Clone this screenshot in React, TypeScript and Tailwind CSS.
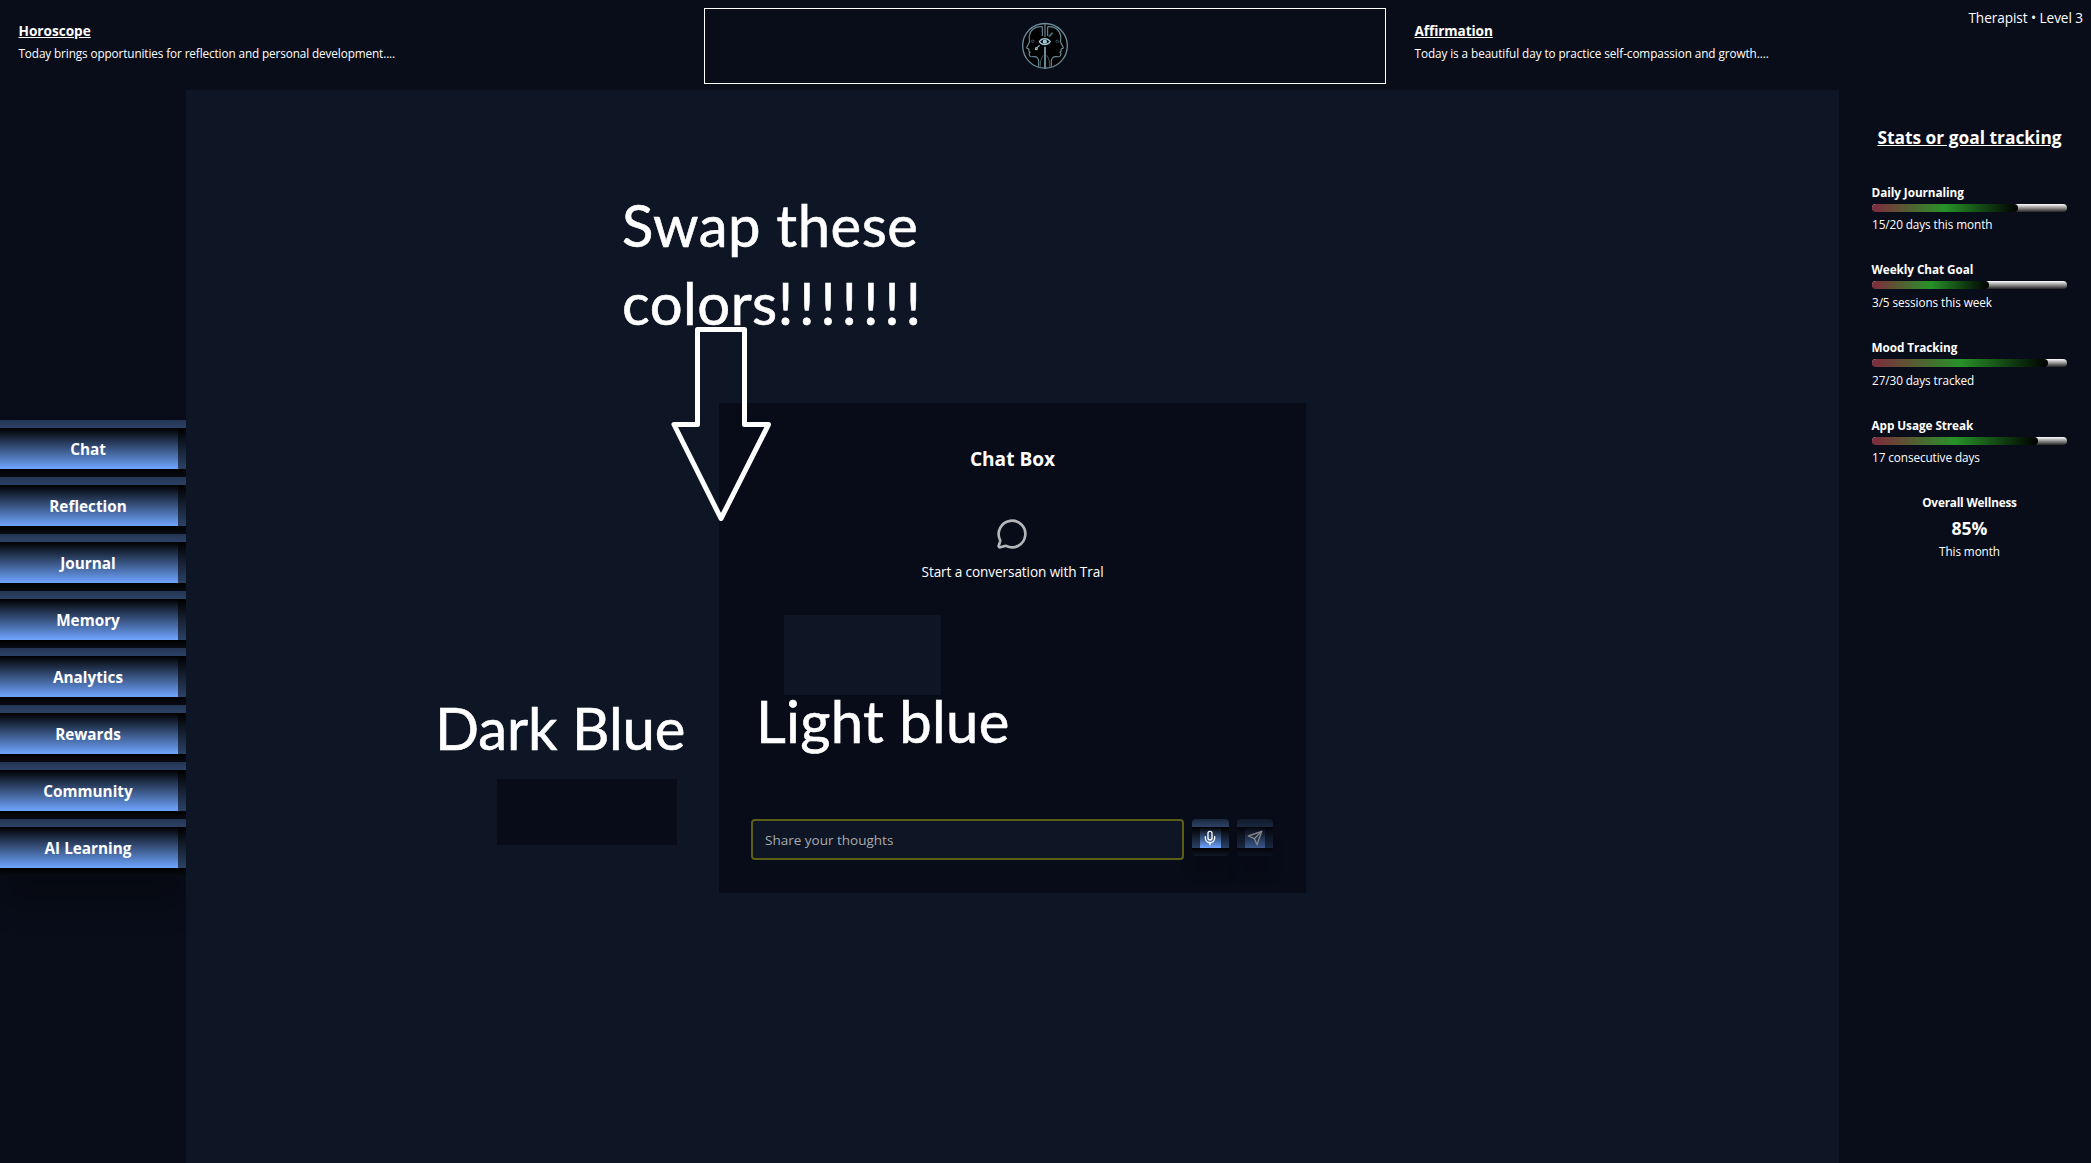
import { MessageCircle, Mic } from "lucide-react";

const navItems = [
  "Chat",
  "Reflection",
  "Journal",
  "Memory",
  "Analytics",
  "Rewards",
  "Community",
  "AI Learning",
];

const goals = [
  { title: "Daily Journaling", detail: "15/20 days this month", percent: 75 },
  { title: "Weekly Chat Goal", detail: "3/5 sessions this week", percent: 60 },
  { title: "Mood Tracking", detail: "27/30 days tracked", percent: 90 },
  { title: "App Usage Streak", detail: "17 consecutive days", percent: 85 },
];

function ProfileHalf() {
  return (
    <>
      <path d="M127 80C105 79 91 90 88 108C86 116 90 120 88 127L80 143C80 147 86 145 87 148L86 153L90 156L87 160C88 170 92 171 101 170C111 169 116 176 116 184V200" />
      <path d="M121 204V192C121 178 127 172 130 166" strokeWidth="2" />
      <path d="M93 124C96 119 101 119 103 124C100 128 96 128 93 124Z" strokeWidth="2.5" opacity="0.75" />
    </>
  );
}

function Logo() {
  return (
    <svg className="h-12 w-[46px]" viewBox="66 66 138 144" fill="none" stroke="#668a98" strokeWidth="3.5">
      <circle cx="135" cy="137.5" r="67" fill="#000" stroke="#6d8d9a" strokeWidth="4" />
      <ProfileHalf />
      <g transform="translate(270 0) scale(-1 1)">
        <ProfileHalf />
      </g>
      <path d="M127 80V108M135 70V110M143 80V108" />
      <path d="M135 140V206" strokeWidth="6" />
      <path d="M118 125C126 113 142 113 151 125C142 137 126 137 118 125Z" fill="#0b1319" stroke="#a5c6d3" />
      <circle cx="134.500" cy="125" r="4.500" fill="#a5c6d3" stroke="#a5c6d3" />
      <circle cx="109" cy="146" r="3" stroke="#9dbdc9" />
      <path d="M111 143L119 136" stroke="#9dbdc9" />
      <path d="M147 110L158 98" strokeWidth="6" opacity="0.7" />
    </svg>
  );
}

function Header() {
  return (
    <header className="flex h-[90px] shrink-0">
      <div className="w-[704px] pt-[21px] pl-[18.500px]">
        <h2 className="text-[13.6px] leading-5 font-bold underline">Horoscope</h2>
        <p className="mt-1 text-[11.75px] leading-4 tracking-[-0.11px]">
          Today brings opportunities for reflection and personal development....
        </p>
      </div>
      <div className="mt-2 flex h-[76px] w-[682px] items-center justify-center border border-white">
        <Logo />
      </div>
      <div className="flex-1 pt-[21px] pl-[28.500px]">
        <h2 className="text-[13.6px] leading-5 font-bold tracking-[-0.08px] underline">Affirmation</h2>
        <p className="mt-1 text-[11.75px] leading-4 tracking-[-0.08px]">
          Today is a beautiful day to practice self-compassion and growth....
        </p>
      </div>
      <p className="pt-2 pr-2 text-[13.6px] leading-5 tracking-[-0.06px]">Therapist • Level 3</p>
    </header>
  );
}

function Sidebar() {
  return (
    <nav className="w-[186px] pt-[330px]">
      <div className="shadow-[0_28px_28px_rgba(0,0,0,0.25)]">
        {navItems.map((item) => (
          <button
            key={item}
            className="block h-[57px] w-full border-8 border-l-0 border-black/60 bg-linear-to-b/srgb from-black to-[#6fa5ff] pt-[2px] pr-[2px] text-center text-[15.3px] font-bold"
          >
            {item}
          </button>
        ))}
      </div>
    </nav>
  );
}

function SendIcon() {
  return (
    <svg
      className="size-4 shrink-0"
      viewBox="0 0 24 24"
      fill="none"
      stroke="currentColor"
      strokeWidth="2"
      strokeLinecap="round"
      strokeLinejoin="round"
    >
      <path d="m22 2-7 20-4-9-9-4Z" />
      <path d="M22 2 11 13" />
    </svg>
  );
}

function ChatCard() {
  return (
    <section className="mt-[313px] ml-[533px] flex h-[490px] w-[587px] flex-col bg-[#080c18] px-8 pt-[42px]">
      <h1 className="text-center text-[19.1px] leading-7 font-bold">Chat Box</h1>
      <div className="mt-[44.500px] flex flex-col items-center">
        <MessageCircle className="mr-px size-8 opacity-70" />
        <p className="mt-3 text-[13.6px] leading-5 tracking-[-0.1px]">Start a conversation with Tral</p>
      </div>
      <div className="mt-auto mb-[33px] flex items-start gap-2">
        <input
          className="h-[41px] w-[433px] rounded border-2 border-[#5a5f15] bg-[#0e1524] px-3 text-[13.5px] text-white outline-none placeholder:text-[#a8abb1] placeholder:opacity-100"
          placeholder="Share your thoughts"
        />
        <button className="flex size-[37px] shrink-0 items-center justify-center rounded border-8 border-black/60 bg-linear-to-b/srgb from-black to-[#6fa5ff] pr-px shadow-[0_20px_12px_rgba(0,0,0,0.12)]">
          <Mic className="size-4 shrink-0" />
        </button>
        <button className="flex h-[37px] w-9 shrink-0 items-center justify-center rounded border-8 border-black/60 bg-linear-to-b/srgb from-black to-[#6fa5ff] opacity-50 shadow-[0_20px_12px_rgba(0,0,0,0.12)]">
          <SendIcon />
        </button>
      </div>
    </section>
  );
}

function StatsPanel() {
  return (
    <aside className="flex-1 pt-[32.500px] pr-6 pl-[33px]">
      <h2 className="text-center text-[17.35px] leading-7 font-bold whitespace-nowrap underline">
        Stats or goal tracking
      </h2>
      <div className="mt-[33.300px]">
        {goals.map((goal) => (
          <div key={goal.title} className="h-[77.67px]">
            <h3 className="-ml-[0.5px] text-[11.75px] leading-4 font-bold tracking-[-0.06px]">{goal.title}</h3>
            <div className="mt-1 h-2 overflow-hidden rounded-full bg-linear-to-b/srgb from-white to-[#222]">
              <div
                className="h-full rounded-full bg-linear-to-r/srgb from-[#802a3c] via-[#279228] to-black"
                style={{ width: `${goal.percent}%` }}
              />
            </div>
            <p className="mt-[4.500px] text-[11.75px] leading-4 tracking-[-0.08px]">{goal.detail}</p>
          </div>
        ))}
      </div>
      <div className="text-center">
        <h3 className="text-[11.75px] leading-4 font-bold tracking-[-0.18px]">Overall Wellness</h3>
        <p className="mt-1 text-[17.6px] leading-7 font-bold">85%</p>
        <p className="mt-px text-[11.75px] leading-4 tracking-[-0.1px]">This month</p>
      </div>
    </aside>
  );
}

function Annotations() {
  return (
    <div className="pointer-events-none absolute inset-0 font-['Lato',sans-serif] text-[58px] leading-[78px] whitespace-nowrap [-webkit-text-stroke:0.6px_white]">
      <p className="absolute top-[185.500px] left-[622px] tracking-[0.5px]">
        Swap these
        <br />
        colors<span className="tracking-[5.7px]">!!!!!!!</span>
      </p>
      <svg
        className="absolute top-[320px] left-[664px]"
        width="114"
        height="208"
        viewBox="664 320 114 208"
        fill="none"
        stroke="#fff"
        strokeWidth="5"
        strokeLinejoin="round"
      >
        <path d="M697.500 329.500H744.500V424.500H768.500L721 518.500L674 424.500H697.500Z" />
      </svg>
      <div className="absolute top-[615px] left-[784px] h-20 w-[157px] bg-[#0e1524]" />
      <p className="absolute top-[682px] left-[756px] tracking-[0.3px]">Light blue</p>
      <p className="absolute top-[689px] left-[435px] tracking-[-0.1px]">Dark Blue</p>
      <div className="absolute top-[779px] left-[497px] h-[66px] w-[180px] bg-[#080c18]" />
    </div>
  );
}

export default function App() {
  return (
    <div className="relative flex h-screen flex-col overflow-hidden bg-[#090d19] font-['Open_Sans',sans-serif] text-white">
      <Header />
      <div className="flex flex-1">
        <Sidebar />
        <main className="w-[1653px] bg-[#0e1524]">
          <ChatCard />
        </main>
        <StatsPanel />
      </div>
      <Annotations />
    </div>
  );
}
